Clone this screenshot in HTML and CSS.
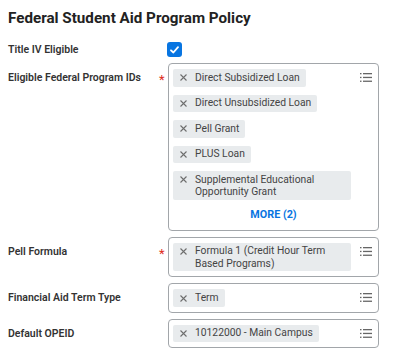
FILE: index.html
```html
<!DOCTYPE html>
<html lang="en">
  <head>
    <meta charset="UTF-8" />
    <meta name="viewport" content="width=device-width, initial-scale=1.0" />
    <title>Federal Student Aid Program Policy</title>
    <link rel="stylesheet" href="styles.css">
  </head>

  <body>
    <h2 class="title">Federal Student Aid Program Policy</h2>

    <div class="row row-check">
      <div class="label">Title IV Eligible</div>
      <div class="req"></div>
      <div class="field">
        <span class="checkbox">
          <svg width="9" height="8" viewBox="0 0 9 8">
            <path d="M1 4.3 L3.4 6.5 L8 1.2" fill="none" stroke="#fff" stroke-width="1.8" stroke-linecap="round" stroke-linejoin="round" />
          </svg>
        </span>
      </div>
    </div>

    <div class="row">
      <div class="label">Eligible Federal Program IDs</div>
      <div class="req">*</div>
      <div class="box">
        <div class="chips">
          <div class="chip"><span class="x"></span><span class="chip-text">Direct Subsidized Loan</span></div>
          <div class="chip"><span class="x"></span><span class="chip-text">Direct Unsubsidized Loan</span></div>
          <div class="chip"><span class="x"></span><span class="chip-text">Pell Grant</span></div>
          <div class="chip"><span class="x"></span><span class="chip-text">PLUS Loan</span></div>
          <div class="chip"><span class="x"></span><span class="chip-text">Supplemental Educational Opportunity Grant</span></div>
        </div>
        <div class="more">MORE (2)</div>
        <span class="list-icon"></span>
      </div>
    </div>

    <div class="row">
      <div class="label">Pell Formula</div>
      <div class="req">*</div>
      <div class="box">
        <div class="chips">
          <div class="chip"><span class="x"></span><span class="chip-text">Formula 1 (Credit Hour Term Based Programs)</span></div>
        </div>
        <span class="list-icon"></span>
      </div>
    </div>

    <div class="row">
      <div class="label">Financial Aid Term Type</div>
      <div class="req"></div>
      <div class="box">
        <div class="chips">
          <div class="chip"><span class="x"></span><span class="chip-text">Term</span></div>
        </div>
        <span class="list-icon"></span>
      </div>
    </div>

    <div class="row">
      <div class="label">Default OPEID</div>
      <div class="req"></div>
      <div class="box">
        <div class="chips">
          <div class="chip"><span class="x"></span><span class="chip-text">10122000 - Main Campus</span></div>
        </div>
        <span class="list-icon"></span>
      </div>
    </div>

    <script>
      // icons drawn once and copied into every field
      const listSvg =
        '<svg width="12" height="9" viewBox="0 0 12 9">' +
        '<rect x="0" y="0" width="1.5" height="1.3" fill="#666"/>' +
        '<rect x="0" y="3.8" width="1.5" height="1.3" fill="#666"/>' +
        '<rect x="0" y="7.6" width="1.5" height="1.3" fill="#666"/>' +
        '<rect x="3" y="0" width="9" height="1.3" fill="#666"/>' +
        '<rect x="3" y="3.8" width="9" height="1.3" fill="#666"/>' +
        '<rect x="3" y="7.6" width="9" height="1.3" fill="#666"/>' +
        "</svg>";
      const xSvg =
        '<svg width="7" height="7" viewBox="0 0 7 7">' +
        '<path d="M0.5 0.5 L6.5 6.5 M6.5 0.5 L0.5 6.5" stroke="#6e6e6e" stroke-width="1.1"/>' +
        "</svg>";

      document.querySelectorAll(".list-icon").forEach((el) => {
        el.innerHTML = listSvg;
      });
      document.querySelectorAll(".x").forEach((el) => {
        el.innerHTML = xSvg;
      });
    </script>
  </body>
</html>
```

FILE: styles.css
```css
* {
  margin: 0;
  padding: 0;
  box-sizing: border-box;
}

body {
  font-family: Roboto, "Liberation Sans", Arial, sans-serif;
  background-color: #fff;
  color: #333;
  padding: 8px;
}

.title {
  font-size: 15.2px;
  line-height: 20px;
  font-weight: 700;
  color: #222;
  margin-bottom: 14px;
}

.row {
  display: grid;
  grid-template-columns: 150px 10px 211px;
  margin-top: 6px;
}

.row-check {
  margin-top: 0;
  margin-bottom: 2px;
}

.label {
  font-size: 10.5px;
  font-weight: 600;
  color: #333;
  line-height: 17.5px;
  padding-top: 6px;
}

.row-check .label {
  padding-top: 0;
  line-height: 15px;
}

.req {
  color: #de2e21;
  font-size: 13px;
  line-height: 17.5px;
  padding-top: 8px;
  padding-left: 1px;
}

.field {
  display: flex;
  align-items: center;
}

.checkbox {
  width: 15px;
  height: 15px;
  margin-left: -1px;
  background-color: #0875e1;
  border-radius: 3px;
  display: flex;
  align-items: center;
  justify-content: center;
}

.box {
  position: relative;
  border: 1px solid #a2a6aa;
  border-radius: 4px;
  padding: 5px 27px 5px 4px;
}

.chips {
  display: flex;
  flex-direction: column;
  align-items: flex-start;
  gap: 8px;
}

.chip {
  display: flex;
  align-items: flex-start;
  background-color: #e8ebed;
  border-radius: 2px;
  min-height: 17.5px;
  padding: 1px 6px 1px 7px;
  max-width: 100%;
}

.x {
  display: flex;
  align-items: center;
  height: 15.5px;
  margin-right: 8px;
  flex-shrink: 0;
}

.chip-text {
  font-size: 10.3px;
  line-height: 12.6px;
  padding-top: 1.5px;
  color: #444;
}

.more {
  text-align: center;
  color: #0875e1;
  font-size: 10.8px;
  font-weight: 700;
  line-height: 19px;
  margin-top: 5px;
  margin-right: -23px;
  margin-bottom: 1px;
}

.list-icon {
  position: absolute;
  top: 9px;
  right: 6px;
  line-height: 0;
}
```
